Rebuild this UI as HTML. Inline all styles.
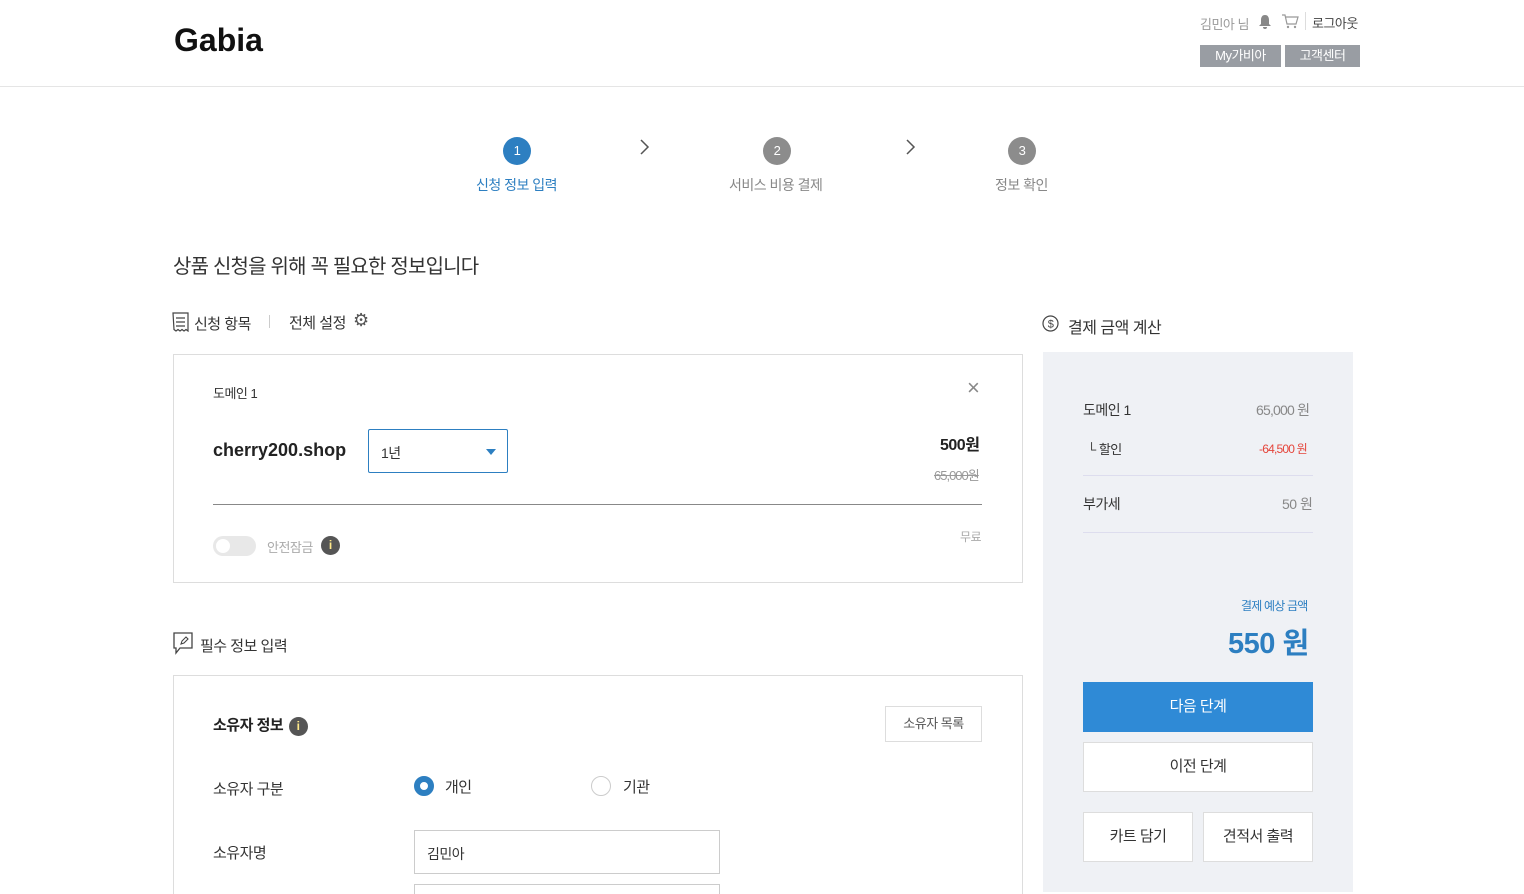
<!DOCTYPE html>
<html><head><meta charset="utf-8"><style>
*{box-sizing:border-box;margin:0;padding:0}
html{width:1524px;height:894px;overflow:hidden}
body{width:1524px;height:894px;overflow:hidden;background:#fff;font-family:"Liberation Sans","Noto Sans CJK KR",sans-serif;color:#333;position:relative;letter-spacing:-0.5px}
.a{position:absolute;white-space:nowrap}
.hdr{position:absolute;left:0;top:0;width:1524px;height:87px;border-bottom:1px solid #e5e5e5}
.btn{position:absolute;background:#999da3;color:#fff;font-size:13px;text-align:center;line-height:22px;height:22px}
.circ{position:absolute;width:28px;height:28px;border-radius:50%;color:#fff;font-size:13px;text-align:center;line-height:28px}
.box{position:absolute;border:1px solid #ddd;background:#fff}
.info{display:inline-block;width:19px;height:19px;border-radius:50%;background:#555;color:#ffe98a;font-size:12px;text-align:center;line-height:19px;font-weight:bold;vertical-align:middle;letter-spacing:0}
.wb{position:absolute;background:#fff;border:1px solid #ddd;text-align:center;font-size:15px;color:#333}
</style></head><body>
<div class="hdr"></div>
<div class="a" style="left:174px;top:22px;font-size:32px;font-weight:bold;color:#111;letter-spacing:0">Gabia</div>
<div class="a" style="left:1200px;top:14px;font-size:13px;color:#999">김민아 님</div>
<svg class="a" style="left:1258px;top:14px" width="14" height="16" viewBox="0 0 14 16"><path d="M7 1c-3 0-4 2.5-4 5v4l-2 2h12l-2-2V6c0-2.5-1-5-4-5z M5 13a2 2 0 0 0 4 0z" fill="#888"/></svg>
<svg class="a" style="left:1281px;top:13px" width="18" height="17" viewBox="0 0 18 17"><path d="M1 2h3l2 9h9l2-7H5" fill="none" stroke="#999" stroke-width="1.2"/><circle cx="7" cy="14" r="1.2" fill="#999"/><circle cx="14" cy="14" r="1.2" fill="#999"/></svg>
<div class="a" style="left:1305px;top:12px;width:1px;height:18px;background:#ddd"></div>
<div class="a" style="left:1312px;top:13px;font-size:13px;color:#444">로그아웃</div>
<div class="btn" style="left:1200px;top:45px;width:81px">My가비아</div>
<div class="btn" style="left:1285px;top:45px;width:75px">고객센터</div>

<div class="circ" style="left:503px;top:137px;background:#2d7fc1">1</div>
<div class="a" style="left:476px;top:175px;font-size:14px;color:#2d7fc1">신청 정보 입력</div>
<svg class="a" style="left:639px;top:138px" width="12" height="18" viewBox="0 0 12 18"><path d="M2 2l7 7-7 7" fill="none" stroke="#555" stroke-width="1.5"/></svg>
<div class="circ" style="left:763px;top:137px;background:#8c8c8c">2</div>
<div class="a" style="left:729px;top:175px;font-size:14px;color:#888">서비스 비용 결제</div>
<svg class="a" style="left:905px;top:138px" width="12" height="18" viewBox="0 0 12 18"><path d="M2 2l7 7-7 7" fill="none" stroke="#555" stroke-width="1.5"/></svg>
<div class="circ" style="left:1008px;top:137px;background:#8c8c8c">3</div>
<div class="a" style="left:995px;top:175px;font-size:14px;color:#888">정보 확인</div>

<div class="a" style="left:173px;top:250px;font-size:20px;color:#333;letter-spacing:-0.8px">상품 신청을 위해 꼭 필요한 정보입니다</div>
<svg class="a" style="left:172px;top:312px" width="17" height="20" viewBox="0 0 17 20"><path d="M1 1h15v18l-2-1.5-2 1.5-2-1.5-2 1.5-2-1.5-2 1.5-2-1.5z M4 6h9M4 10h9M4 14h9" fill="none" stroke="#444" stroke-width="1.2"/></svg>
<div class="a" style="left:194px;top:313px;font-size:15px">신청 항목</div>
<div class="a" style="left:269px;top:315px;width:1px;height:13px;background:#ccc"></div>
<div class="a" style="left:289px;top:312px;font-size:15px">전체 설정</div>
<div class="a" style="left:353px;top:310px;font-size:18px;color:#555">⚙</div>

<div class="box" style="left:173px;top:354px;width:850px;height:229px"></div>
<div class="a" style="left:213px;top:383px;font-size:13px">도메인 1</div>
<div class="a" style="left:967px;top:375px;font-size:22px;color:#888;font-weight:300">×</div>
<div class="a" style="left:213px;top:440px;font-size:18px;font-weight:bold;color:#222;letter-spacing:0">cherry200.shop</div>
<div class="a" style="left:368px;top:429px;width:140px;height:44px;border:1px solid #2d7fc1;border-radius:2px;font-size:14px;padding:13px 12px">1년</div>
<div class="a" style="left:486px;top:449px;width:0;height:0;border-left:5px solid transparent;border-right:5px solid transparent;border-top:6px solid #2d7fc1"></div>
<div class="a" style="left:940px;top:431px;font-size:16px;font-weight:bold;color:#222">500원</div>
<div class="a" style="left:934px;top:465px;font-size:13px;color:#999;text-decoration:line-through;letter-spacing:-1px">65,000원</div>
<div class="a" style="left:213px;top:504px;width:769px;height:1px;background:#888"></div>
<div class="a" style="left:960px;top:528px;font-size:12px;color:#aaa">무료</div>
<div class="a" style="left:213px;top:536px;width:43px;height:20px;border-radius:10px;background:#e8e8e8"></div>
<div class="a" style="left:216px;top:539px;width:14px;height:14px;border-radius:50%;background:#fff"></div>
<div class="a" style="left:267px;top:537px;font-size:13px;color:#aaa">안전잠금</div>
<div class="a" style="left:321px;top:536px"><span class="info">i</span></div>

<svg class="a" style="left:172px;top:632px" width="22" height="24" viewBox="0 0 22 24"><path d="M2 1h18v15H8l-4 5v-5H2z" fill="none" stroke="#444" stroke-width="1.3"/><path d="M9 12l1-3 4-4 2 2-4 4z" fill="none" stroke="#444" stroke-width="1.1"/></svg>
<div class="a" style="left:200px;top:635px;font-size:15px">필수 정보 입력</div>

<div class="box" style="left:173px;top:675px;width:850px;height:240px"></div>
<div class="a" style="left:213px;top:714px;font-size:15px;font-weight:bold;color:#222">소유자 정보 <span class="info" style="margin-left:2px">i</span></div>
<div class="wb" style="left:885px;top:706px;width:97px;height:36px;line-height:34px;font-size:13px;color:#555">소유자 목록</div>
<div class="a" style="left:213px;top:778px;font-size:15px">소유자 구분</div>
<div class="a" style="left:414px;top:776px;width:20px;height:20px;border-radius:50%;border:6px solid #2d7fc1"></div>
<div class="a" style="left:445px;top:776px;font-size:15px">개인</div>
<div class="a" style="left:591px;top:776px;width:20px;height:20px;border-radius:50%;border:1px solid #ccc"></div>
<div class="a" style="left:623px;top:776px;font-size:15px">기관</div>
<div class="a" style="left:213px;top:842px;font-size:15px">소유자명</div>
<div class="a" style="left:414px;top:830px;width:306px;height:44px;border:1px solid #ccc;font-size:14px;padding:13px 12px">김민아</div>
<div class="a" style="left:414px;top:884px;width:306px;height:10px;border:1px solid #ccc;border-bottom:none"></div>

<svg class="a" style="left:1042px;top:315px" width="17" height="17" viewBox="0 0 17 17"><circle cx="8.5" cy="8.5" r="7.5" fill="none" stroke="#444" stroke-width="1.2"/><text x="8.5" y="12.5" font-size="11" text-anchor="middle" fill="#444" font-family="Liberation Sans">$</text></svg>
<div class="a" style="left:1068px;top:314px;font-size:16px">결제 금액 계산</div>
<div class="a" style="left:1043px;top:352px;width:310px;height:540px;background:#eff1f5"></div>
<div class="a" style="left:1083px;top:400px;font-size:14px">도메인 1</div>
<div class="a" style="left:1256px;top:400px;font-size:14px;color:#888;letter-spacing:-0.8px">65,000 원</div>
<div class="a" style="left:1087px;top:439px;font-size:13px">└ 할인</div>
<div class="a" style="left:1259px;top:440px;font-size:12px;color:#e5453b;letter-spacing:-0.8px">-64,500 원</div>
<div class="a" style="left:1083px;top:475px;width:230px;height:1px;background:#dde"></div>
<div class="a" style="left:1083px;top:494px;font-size:14px">부가세</div>
<div class="a" style="left:1282px;top:494px;font-size:14px;color:#888">50 원</div>
<div class="a" style="left:1083px;top:532px;width:230px;height:1px;background:#dde"></div>
<div class="a" style="left:1241px;top:597px;font-size:12px;color:#2d7fc1;letter-spacing:-0.8px">결제 예상 금액</div>
<div class="a" style="left:1228px;top:620px;font-size:29px;font-weight:bold;color:#2d7fc1">550 원</div>
<div class="a" style="left:1083px;top:682px;width:230px;height:50px;background:#2f8ad6;color:#fff;text-align:center;line-height:50px;font-size:15px">다음 단계</div>
<div class="wb" style="left:1083px;top:742px;width:230px;height:50px;line-height:48px">이전 단계</div>
<div class="wb" style="left:1083px;top:812px;width:110px;height:50px;line-height:48px">카트 담기</div>
<div class="wb" style="left:1203px;top:812px;width:110px;height:50px;line-height:48px">견적서 출력</div>
</body></html>
